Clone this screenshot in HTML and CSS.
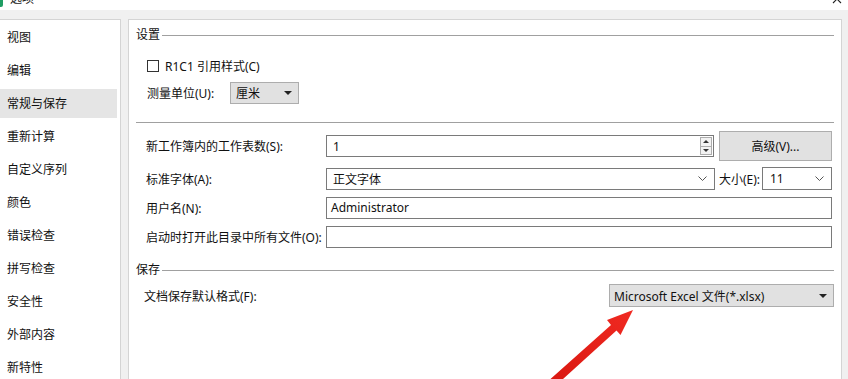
FILE: index.html
```html
<!DOCTYPE html>
<html lang="zh-CN">
<head>
<meta charset="utf-8">
<title>选项</title>
<link rel="stylesheet" href="styles.css">
</head>
<body>
<div class="titlebar">
  <div class="title-inner">
    <span class="app-icon"></span>
    <span class="title-text">选项</span>
    <svg class="close" width="10" height="10" viewBox="0 0 10 10"><path d="M1 1L9 9M9 1L1 9" stroke="#222" stroke-width="1.1" fill="none"/></svg>
  </div>
</div>
<div class="main">
  <nav class="nav">
    <div class="nav-item">视图</div>
    <div class="nav-item">编辑</div>
    <div class="nav-item active">常规与保存</div>
    <div class="nav-item">重新计算</div>
    <div class="nav-item">自定义序列</div>
    <div class="nav-item">颜色</div>
    <div class="nav-item">错误检查</div>
    <div class="nav-item">拼写检查</div>
    <div class="nav-item">安全性</div>
    <div class="nav-item">外部内容</div>
    <div class="nav-item">新特性</div>
  </nav>
  <section class="content">
    <div class="sec-head"><span>设置</span></div>
    <div class="check-row"><span class="checkbox"></span><span>R1C1 引用样式(C)</span></div>
    <div class="measure-row">
      <span class="measure-label">测量单位(U):</span>
      <div class="dd dd-small"><span>厘米</span><span class="tri"></span></div>
    </div>
    <div class="sep"></div>
    <div class="form">
      <div class="row row-tall">
        <span class="lbl">新工作簿内的工作表数(S):</span>
        <div class="input grow"><span>1</span>
          <div class="spin"><span class="spin-btn"><span class="tri-up"></span></span><span class="spin-btn"><span class="tri-down"></span></span></div>
        </div>
        <div class="btn">高级(V)...</div>
      </div>
      <div class="row">
        <span class="lbl">标准字体(A):</span>
        <div class="input grow"><span>正文字体</span><svg class="chev" width="9" height="5" viewBox="0 0 9 5"><polyline points="0.5,0.5 4.5,4.5 8.5,0.5" fill="none" stroke="#555" stroke-width="1"/></svg></div>
        <span class="size-lbl">大小(E):</span>
        <div class="input size"><span>11</span><svg class="chev" width="9" height="5" viewBox="0 0 9 5"><polyline points="0.5,0.5 4.5,4.5 8.5,0.5" fill="none" stroke="#555" stroke-width="1"/></svg></div>
      </div>
      <div class="row">
        <span class="lbl">用户名(N):</span>
        <div class="input grow user"><span>Administrator</span></div>
      </div>
      <div class="row">
        <span class="lbl">启动时打开此目录中所有文件(O):</span>
        <div class="input grow"></div>
      </div>
    </div>
    <div class="sec-head sec-save"><span>保存</span></div>
    <div class="save-row">
      <span>文档保存默认格式(F):</span>
      <div class="dd dd-wide"><span>Microsoft Excel 文件(*.xlsx)</span><span class="tri"></span></div>
    </div>
  </section>
</div>
<svg class="arrow" width="848" height="379" viewBox="0 0 848 379">
  <defs>
    <linearGradient id="ag" x1="0" y1="1" x2="1" y2="0">
      <stop offset="0" stop-color="#d8160f"/>
      <stop offset="1" stop-color="#f02a22"/>
    </linearGradient>
  </defs>
  <polygon points="633,310 620.5,335 616.5,330.5 552,389 546,383 611,325 607,320" fill="url(#ag)"/>
</svg>
</body>
</html>
```
FILE: styles.css
```css
* { box-sizing: border-box; }
html, body { margin: 0; padding: 0; }
body {
  width: 848px;
  height: 379px;
  overflow: hidden;
  position: relative;
  background: #f0f0f0;
  font-family: "Noto Sans", "Noto Sans CJK SC", sans-serif;
  font-size: 12px;
  color: #111;
}
.titlebar {
  height: 10px;
  background: #fff;
  overflow: hidden;
}
.title-inner {
  display: flex;
  align-items: center;
  height: 22px;
  margin-top: -12px;
}
.app-icon {
  width: 14px;
  height: 16px;
  margin-left: -11px;
  background: #1f9d63;
  border-radius: 2px;
}
.title-text {
  margin-left: 7px;
  line-height: 22px;
  color: #222;
}
.close { margin-left: auto; margin-right: 6px; }
.main {
  display: flex;
  gap: 7px;
  height: 369px;
  padding: 9px 6px 0 0;
}
.nav {
  width: 121px;
  flex: none;
  background: #fff;
  border-top: 1px solid #d4d4d4;
  border-right: 1px solid #d4d4d4;
  padding-top: 3px;
}
.nav-item {
  height: 29px;
  line-height: 29px;
  margin: 0 3px 4px 0;
  padding-left: 7px;
  white-space: nowrap;
}
.nav-item.active { background: #e5e5e5; }
.content {
  flex: 1;
  background: #fff;
  border: 1px solid #d4d4d4;
  border-bottom: none;
  padding: 0 7px;
}
.sec-head {
  display: flex;
  align-items: center;
  height: 16px;
  margin-top: 7px;
  line-height: 16px;
}
.sec-head::after {
  content: "";
  flex: 1;
  height: 1px;
  background: #a0a0a0;
  margin-left: 2px;
}
.check-row {
  display: flex;
  align-items: center;
  gap: 6px;
  height: 22px;
  margin-top: 12px;
  padding-left: 11px;
}
.checkbox {
  width: 12px;
  height: 12px;
  border: 1px solid #333;
  background: #fff;
}
.measure-row {
  display: flex;
  align-items: center;
  margin-top: 5px;
  padding-left: 11px;
}
.measure-label { width: 83px; }
.dd {
  display: flex;
  align-items: center;
  justify-content: space-between;
  height: 22px;
  background: #e1e1e1;
  border: 1px solid #adadad;
}
.dd-small { width: 69px; padding: 0 6px 0 5px; }
.dd-wide { width: 225px; height: 23px; padding: 0 6px 0 4px; }
.tri {
  width: 0;
  height: 0;
  border-left: 4px solid transparent;
  border-right: 4px solid transparent;
  border-top: 4px solid #222;
}
.sep {
  height: 1px;
  background: #a0a0a0;
  margin-top: 18px;
}
.form {
  display: flex;
  flex-direction: column;
  gap: 6px;
  margin-top: 8px;
  padding: 0 2px 0 10px;
}
.row {
  display: flex;
  align-items: center;
  height: 23px;
}
.row-tall { height: 30px; }
.lbl { width: 180px; flex: none; white-space: nowrap; }
.input {
  display: flex;
  align-items: center;
  justify-content: space-between;
  height: 22px;
  border: 1px solid #7a7a7a;
  background: #fff;
  padding: 0 6px 0 6px;
}
.input.user { padding-left: 4px; }
.grow { flex: 1; }
.input .chev { margin-right: 1px; }
.size { width: 70px; flex: none; height: 23px; padding-left: 7px; }
.size-lbl { margin: 0 2px 0 4px; white-space: nowrap; }
.spin {
  display: flex;
  flex-direction: column;
  width: 12px;
  height: 18px;
  margin-right: -5px;
}
.spin-btn {
  flex: 1;
  display: flex;
  align-items: center;
  justify-content: center;
  background: #f2f2f2;
  border: 1px solid #adadad;
}
.spin-btn + .spin-btn { border-top: none; }
.tri-up, .tri-down {
  width: 0;
  height: 0;
  border-left: 3px solid transparent;
  border-right: 3px solid transparent;
}
.tri-up { border-bottom: 3px solid #333; }
.tri-down { border-top: 3px solid #333; }
.btn {
  width: 113px;
  height: 30px;
  margin-left: 5px;
  flex: none;
  display: flex;
  align-items: center;
  justify-content: center;
  background: #e1e1e1;
  border: 1px solid #adadad;
}
.sec-save { margin-top: 14px; }
.save-row {
  display: flex;
  align-items: center;
  justify-content: space-between;
  margin-top: 6px;
  padding-left: 8px;
}
.arrow {
  position: absolute;
  left: 0;
  top: 0;
  pointer-events: none;
}
```
